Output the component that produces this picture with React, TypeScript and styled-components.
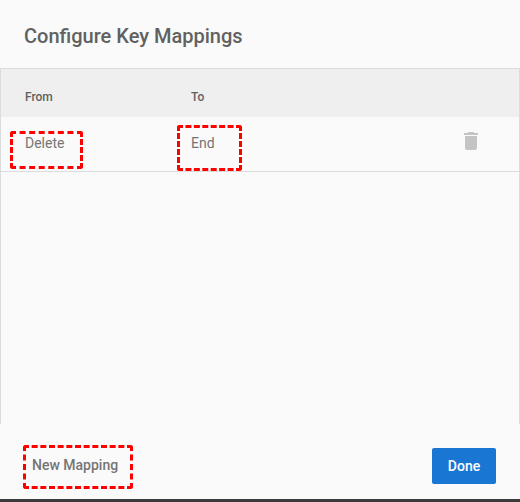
import React from "react";
import styled, { createGlobalStyle } from "styled-components";

const GlobalStyle = createGlobalStyle`
  html, body {
    margin: 0;
    padding: 0;
    background: #fafafa;
  }
  * {
    box-sizing: border-box;
  }
`;

const Dialog = styled.div`
  width: 520px;
  height: 502px;
  display: flex;
  flex-direction: column;
  background: #fafafa;
  border-bottom: 3px solid #3a3a3a;
  font-family: Roboto, "Liberation Sans", sans-serif;
  color: #757575;
`;

const Title = styled.h1`
  margin: 0;
  height: 69px;
  padding: 24px 24px 0;
  font-size: 20px;
  line-height: 24px;
  font-weight: 500;
  color: #616161;
  border-bottom: 1px solid #dcdcdc;
`;

const Content = styled.div`
  flex: 1;
  border-left: 1px solid #dcdcdc;
  border-right: 1px solid #dcdcdc;
`;

const Row = styled.div`
  display: grid;
  grid-template-columns: 166px 1fr 60px;
  align-items: center;
  padding: 0 0 0 24px;
`;

const HeadRow = styled(Row)`
  height: 48px;
  padding-top: 8px;
  background: #efefef;
  font-size: 12px;
  font-weight: 500;
  color: #616161;
`;

const MappingRow = styled(Row)`
  height: 55px;
  padding-bottom: 2px;
  font-size: 14px;
  border-bottom: 1px solid #dcdcdc;
`;

const KeyName = styled.span`
  position: relative;
  justify-self: start;
`;

const Annotation = styled.i<{ $top: number; $left: number; $width: number; $height: number }>`
  position: absolute;
  top: ${(p) => p.$top}px;
  left: ${(p) => p.$left}px;
  width: ${(p) => p.$width}px;
  height: ${(p) => p.$height}px;
  border: 3px dashed #f00;
  border-radius: 3px;
  pointer-events: none;
`;

const TrashButton = styled.button`
  width: 24px;
  height: 24px;
  margin-bottom: 4px;
  padding: 0;
  border: 0;
  background: none;
  color: #c4c4c4;
`;

const Footer = styled.div`
  height: 75px;
  display: flex;
  align-items: center;
  justify-content: space-between;
  padding: 24px 24px 15px 32px;
`;

const TextButton = styled.button`
  position: relative;
  padding: 0 0 2px;
  border: 0;
  background: none;
  font: 500 14px Roboto, "Liberation Sans", sans-serif;
  color: #757575;
`;

const DoneButton = styled.button`
  width: 64px;
  height: 36px;
  border: 0;
  border-radius: 2px;
  background: #1976d2;
  color: #fff;
  font: 500 14px Roboto, "Liberation Sans", sans-serif;
`;

const App = () => {
  return (
    <Dialog>
      <GlobalStyle />
      <Title>Configure Key Mappings</Title>
      <Content>
        <HeadRow>
          <span>From</span>
          <span>To</span>
        </HeadRow>
        <MappingRow>
          <KeyName>
            Delete
            <Annotation $top={-4} $left={-15} $width={73} $height={38} />
          </KeyName>
          <KeyName>
            End
            <Annotation $top={-10} $left={-14} $width={65} $height={46} />
          </KeyName>
          <TrashButton>
            <svg width="24" height="24" viewBox="0 0 24 24" fill="currentColor">
              <path d="M6 19c0 1.1.9 2 2 2h8c1.1 0 2-.9 2-2V7H6v12zM19 4h-3.5l-1-1h-5l-1 1H5v2h14V4z" />
            </svg>
          </TrashButton>
        </MappingRow>
      </Content>
      <Footer>
        <TextButton>
          New Mapping
          <Annotation $top={-12} $left={-9} $width={110} $height={44} />
        </TextButton>
        <DoneButton>Done</DoneButton>
      </Footer>
    </Dialog>
  );
};

export default App;
